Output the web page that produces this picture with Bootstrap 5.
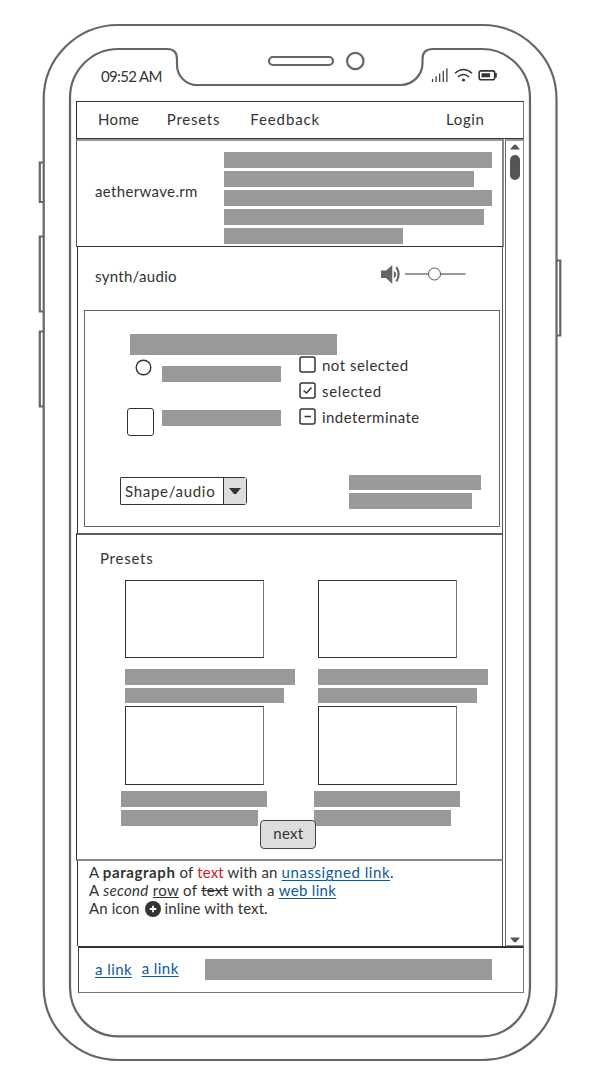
<!DOCTYPE html>
<html lang="en">
<head>
<meta charset="utf-8">
<meta name="viewport" content="width=device-width, initial-scale=1">
<title>aetherwave.rm</title>
<link href="https://cdn.jsdelivr.net/npm/bootstrap@5.3.0/dist/css/bootstrap.min.css" rel="stylesheet">
<style>
:root{--ink:#333;--bar:#999}
body{font-family:Lato,"Liberation Sans",sans-serif;font-size:15px;line-height:18px;color:var(--ink);background:#fff;margin:0}
.phone{width:602px;height:1084px;overflow:hidden}
.frame{left:0;top:0;pointer-events:none}
.t{white-space:nowrap;line-height:18px;display:inline-block}
a{color:#0c5a9e;text-underline-offset:2px}
.bar{background:var(--bar);height:15.6px;flex-shrink:0}
.stack{display:grid;row-gap:3.3px;align-content:start}

/* status bar and top navigation */
.status{height:101px;padding:67px 105px 0 101px}
#clock{letter-spacing:-.65px}
.app{margin-left:76px;width:448px}
.topnav{height:38px;border:1px solid var(--ink);border-right-color:#777;padding:8px 38.500px 0 21px}
.topnav .nav-link{padding:0;color:var(--ink)}
#home{letter-spacing:.35px}
#presets{margin-left:27.400px;letter-spacing:.75px}
#feedback{margin-left:30px;letter-spacing:.9px}
#login{letter-spacing:.6px}

/* site header */
.body-row{height:807px}
.content{width:429px}
.hero{height:108px;border:solid;border-width:2px 2px 1px 1px;border-color:#999 #8a8a8a #333 #555;width:428px;padding:11.400px 0 0 18px}
#brand{margin-top:30px;letter-spacing:.35px}
.hero-bars{margin-right:9.600px}

/* synth section */
.pane{border:solid var(--ink);border-width:0 1px 0 1px;border-right-color:#555}
.synth{height:286px;width:426px;margin-left:1px;padding:18px 0 0 6px}
#synth{margin:2px 0 0 11px;width:286px;letter-spacing:.3px}
.panel{width:416px;height:217px;border:1px solid #666;margin-top:25px;padding:23px 0 0 45px}
.leftcol{width:216px}
.headbar{width:207px;height:21px}
.radio{margin:4px 0 0 5px}
.b1{width:119.300px;margin:11px 0 0 10px}
.sq{width:27px;height:27.500px;border:1.300px solid #333;border-radius:3px;margin:26.500px 0 0 -3.200px;flex-shrink:0}
.b2{width:119.300px;margin:28.500px 0 0 8.200px}
.opts{padding-top:22px;margin-left:-46.500px}
.opt{gap:6px;height:26px}
.opt svg{margin-left:-.5px;margin-top:.3px}
.opt .t{margin-top:-.5px}
#o1{letter-spacing:.5px}
#o2{letter-spacing:.65px}
#o3{letter-spacing:.45px}
.lower{margin:41px 0 0 -10px}
.lower .stack{margin:-2px 0 0 102.500px}
.picker{width:126.500px;height:28.500px;border:1px solid var(--ink);border-radius:1px 3px 3px 1px}
.picker .arrow{width:23px;border-left:1px solid var(--ink);background:#ddd}
#shape{padding:4px 0 0 4px;letter-spacing:.7px}

/* presets */
.presets{height:328px;width:427px;border-top:2px solid #5d5d5d;border-bottom:2px solid #8a8a8a;padding:14px 0 0 23px}
#ph{letter-spacing:.75px}
.thumb{width:139px;border:1px solid var(--ink);border-right-color:#777}
.grid2{display:grid;grid-template-columns:193px 190px;padding-left:25px}
.g1{margin-top:13px}.g1 .stack{margin-top:11px}
.g2{margin-top:3px}.g2 .stack{margin:6px 0 0 -3.600px}
.next-btn{left:183.400px;top:285px;width:56px;height:29px;background:#ddd;border:1px solid #444;border-radius:4px;padding:3px 0 0;font-size:15px;color:var(--ink)}
#next{letter-spacing:.25px}

/* rich text and footer */
.copy{height:85px;width:426px;margin-left:1px;padding:2.200px 0 0 11px}
#l1{letter-spacing:.17px}
#l1 b{letter-spacing:.6px}
#l1 a{letter-spacing:.55px}
#l2{letter-spacing:.33px}
#l3{letter-spacing:.1px}
.plus{vertical-align:-3px;margin-left:1.200px}
.red{color:#d0202a}
.rail{width:19px;border:solid;border-width:2px 1px 1px 1px;border-color:#999 #888 #999 #666;padding-top:3px}
.knob{width:10px;height:25px;border-radius:5px;background:#555;margin-top:5px}
.foot{margin-left:2px;width:446px;height:47px;border:solid;border-width:2px 1px 1px 1px;border-color:#333 #777 #777 #444;padding:12px 0 0 16px}
.foot .t{letter-spacing:.45px}
#f2{margin:-1px 0 0 9.500px}
.footbar{width:287.500px;height:21px;margin:-1px 0 0 26px}
</style>
</head>
<body>
<div class="phone position-relative">
<svg class="frame position-absolute" width="602" height="1084" fill="none" stroke="#666" stroke-width="2.200">
<path d="M118 25H482A74.500 74 0 0 1 556.500 99V987A74.500 73 0 0 1 482 1060H118A74.500 73 0 0 1 43.700 987V99A74.500 74 0 0 1 118 25Z"/>
<path d="M118 49H167Q177 49 177 59V65A20 20 0 0 0 198 85H401A22 22 0 0 0 422.500 63V59Q422.500 49 433 49H482A48 49 0 0 1 530 98V987A48 49.300 0 0 1 482 1036.300H118A48 49.300 0 0 1 70 987V98A48 49 0 0 1 118 49Z"/>
<rect x="269" y="57" width="64" height="8" rx="4"/><circle cx="355.300" cy="61" r="8.200"/>
<path d="M43.700 162.500H39.800V202H43.700M43.700 236.500H39.800V311.500H43.700M43.700 331.500H39.800V406.500H43.700M556.500 260.500H560.300V335.500H556.500"/>
</svg>
<div class="status d-flex justify-content-between">
<span class="t" id="clock">09:52 AM</span>
<svg width="66" height="18" fill="none" stroke="#333" stroke-width="1.200"><path d="M1.500 15V12M5.100 15V9.300M8.700 15V6.600M12.300 15V4M15.900 15V1.300"/><path stroke-width="1.500" d="M24 6.200Q32.500 -1.200 41 6.200M27 9.800Q32.500 5.200 38 9.800"/><circle cx="32.500" cy="13" r="1.600" fill="#333" stroke="none"/><rect x="48.200" y="3.900" width="15.500" height="8.800" rx="2" stroke-width="1.600"/><path fill="#333" stroke="none" d="M50.500 6.300h8.500v4h-8.500zM64 6h1.800v4.400h-1.800z"/></svg>
</div>
<div class="app">
<nav class="topnav d-flex">
<a class="nav-link t" id="home" href="#">Home</a>
<a class="nav-link t" id="presets" href="#">Presets</a>
<a class="nav-link t" id="feedback" href="#">Feedback</a>
<a class="nav-link t ms-auto" id="login" href="#">Login</a>
</nav>
<div class="body-row d-flex">
<div class="content">
<header class="hero d-flex">
<span class="t" id="brand">aetherwave.rm</span>
<div class="stack hero-bars ms-auto"><div class="bar" style="width:268px"></div><div class="bar" style="width:250px"></div><div class="bar" style="width:268px"></div><div class="bar" style="width:260px"></div><div class="bar" style="width:178.500px"></div></div>
</header>
<section class="pane synth">
<div class="d-flex"><span class="t" id="synth">synth/audio</span>
<svg width="88" height="20"><path fill="#666" d="M0 5.500H5L11.300 0V19L5 13H0ZM12.800 6Q15.300 7 15.300 9.500T12.800 13Z"/><path d="M15.300 2Q20 9.500 15.300 16.500" fill="none" stroke="#666" stroke-width="2.200"/><path d="M24 9H84.500" stroke="#777" stroke-width="1.400"/><circle cx="53.500" cy="9" r="6" fill="#fff" stroke="#555"/></svg></div>
<div class="panel">
<div class="d-flex">
<div class="leftcol"><div class="bar headbar"></div>
<div class="d-flex"><svg width="17" height="17" class="radio"><circle cx="8.500" cy="8.500" r="7.300" fill="none" stroke="#333" stroke-width="1.400"/></svg><div class="bar b1"></div></div>
<div class="d-flex"><div class="sq"></div><div class="bar b2"></div></div></div>
<div class="opts">
<div class="opt d-flex"><svg width="17" height="17" fill="none" stroke="#333" stroke-width="1.500"><rect x="1" y="1" width="15" height="15" rx="2"/></svg><span class="t" id="o1">not selected</span></div>
<div class="opt d-flex"><svg width="17" height="17" fill="none" stroke="#333" stroke-width="1.500"><rect x="1" y="1" width="15" height="15" rx="2"/><path d="M4.500 8.500L7.500 11L12.500 5.500"/></svg><span class="t" id="o2">selected</span></div>
<div class="opt d-flex"><svg width="17" height="17" fill="none" stroke="#333" stroke-width="1.500"><rect x="1" y="1" width="15" height="15" rx="2"/><path d="M5.500 8.500H12"/></svg><span class="t" id="o3">indeterminate</span></div>
</div></div>
<div class="d-flex lower"><div class="picker d-flex"><span class="t flex-fill" id="shape">Shape/audio</span><span class="arrow d-flex align-items-center justify-content-center"><svg width="12" height="8"><path fill="#333" d="M0 1H12L7 7H5Z"/></svg></span></div>
<div class="stack"><div class="bar" style="width:131.500px"></div><div class="bar" style="width:123px"></div></div></div>
</div>
</section>
<section class="pane presets position-relative">
<span class="t d-table" id="ph">Presets</span>
<div class="grid2 g1"><div><div class="thumb" style="height:78px"></div><div class="stack"><div class="bar" style="width:170px"></div><div class="bar" style="width:159px"></div></div></div><div><div class="thumb" style="height:78px"></div><div class="stack"><div class="bar" style="width:170px"></div><div class="bar" style="width:159px"></div></div></div></div>
<div class="grid2 g2"><div><div class="thumb" style="height:79px"></div><div class="stack"><div class="bar" style="width:145.500px"></div><div class="bar" style="width:136.500px"></div></div></div><div><div class="thumb" style="height:79px"></div><div class="stack"><div class="bar" style="width:145.500px"></div><div class="bar" style="width:136.500px"></div></div></div></div>
<button class="btn next-btn position-absolute d-flex justify-content-center align-items-start"><span class="t" id="next">next</span></button>
</section>
<section class="pane copy">
<div><span class="t d-block" id="l1">A <b>paragraph</b> of <span class="red">text</span> with an <a href="#">unassigned link</a>.</span></div>
<div><span class="t d-block" id="l2">A <i>second</i> <u>row</u> of <s>text</s> with a <a href="#">web link</a></span></div>
<div><span class="t d-block" id="l3">An icon <svg class="plus" width="16" height="16"><circle cx="8" cy="8" r="8" fill="#333"/><path d="M8 4.700v6.600M4.700 8h6.600" stroke="#fff" stroke-width="1.800"/></svg> inline with text.</span></div>
</section>
</div>
<div class="rail d-flex flex-column align-items-center"><svg width="10" height="6"><path fill="#555" d="M0 5.500L4 .8H6L10 5.500Z"/></svg><div class="knob"></div><svg class="mt-auto" style="margin-bottom:2px" width="10" height="6"><path fill="#555" d="M0 .5L4 5.200H6L10 .5Z"/></svg></div>
</div>
<footer class="foot d-flex"><a href="#" class="t" id="f1">a link</a><a href="#" class="t" id="f2">a link</a><div class="bar footbar"></div></footer>
</div>
</div>
<script src="https://cdn.jsdelivr.net/npm/bootstrap@5.3.0/dist/js/bootstrap.bundle.min.js"></script>
</body>
</html>
